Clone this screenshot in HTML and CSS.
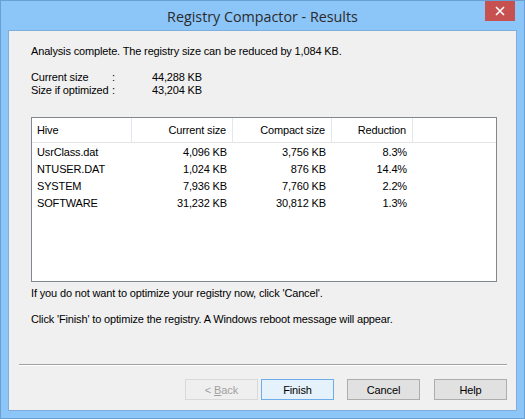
FILE: index.html
```html
<!DOCTYPE html>
<html>
<head>
<meta charset="utf-8">
<link rel="stylesheet" href="styles.css">
</head>
<body>
<div class="window">
  <div class="titlebar">
    <span class="title">Registry Compactor - Results</span>
    <div class="close">
      <svg width="10" height="10" viewBox="0 0 10 10"><path d="M1 1 L9 9 M9 1 L1 9" stroke="#fff" stroke-width="1.6" fill="none"/></svg>
    </div>
  </div>
  <div class="client">
    <p class="summary">Analysis complete. The registry size can be reduced by 1,084 KB.</p>
    <div class="stats">
      <span>Current size</span><span>:</span><span class="val">44,288 KB</span>
      <span>Size if optimized</span><span>:</span><span class="val">43,204 KB</span>
    </div>
    <div class="list">
      <div class="lhead">
        <div class="hc c1">Hive</div>
        <div class="hc c2">Current size</div>
        <div class="hc c3">Compact size</div>
        <div class="hc c4">Reduction</div>
      </div>
      <div class="row"><div class="c1">UsrClass.dat</div><div class="c2">4,096 KB</div><div class="c3">3,756 KB</div><div class="c4">8.3%</div></div>
      <div class="row"><div class="c1">NTUSER.DAT</div><div class="c2">1,024 KB</div><div class="c3">876 KB</div><div class="c4">14.4%</div></div>
      <div class="row"><div class="c1">SYSTEM</div><div class="c2">7,936 KB</div><div class="c3">7,760 KB</div><div class="c4">2.2%</div></div>
      <div class="row"><div class="c1">SOFTWARE</div><div class="c2">31,232 KB</div><div class="c3">30,812 KB</div><div class="c4">1.3%</div></div>
    </div>
    <p class="note1">If you do not want to optimize your registry now, click 'Cancel'.</p>
    <p class="note2">Click 'Finish' to optimize the registry. A Windows reboot message will appear.</p>
    <div class="sep"></div>
    <div class="buttons">
      <button class="btn disabled">&lt; <u>B</u>ack</button>
      <button class="btn default">Finish</button>
      <button class="btn gap">Cancel</button>
      <button class="btn gap">Help</button>
    </div>
  </div>
</div>
</body>
</html>
```
FILE: styles.css
```css
* { box-sizing: border-box; }
html, body { margin: 0; padding: 0; }
body { width: 525px; height: 419px; overflow: hidden; background: #fff; }

.window {
  width: 525px;
  height: 419px;
  background: #8cc5f8;
  border: 1px solid #6a9fd4;
  display: flex;
  flex-direction: column;
  padding: 0 7px 7px 7px;
  position: relative;
}

.titlebar {
  height: 29px;
  display: flex;
  align-items: center;
  justify-content: center;
}
.title {
  font-family: "Open Sans", "Noto Sans", sans-serif;
  font-size: 14.3px;
  color: #2b2b2b;
  margin-left: 0;
  margin-top: 1px;
}
.close {
  position: absolute;
  top: 0;
  right: 9px;
  width: 30px;
  height: 20px;
  background: #c75050;
  display: flex;
  align-items: center;
  justify-content: center;
}

.client {
  flex: 1;
  background: #f0f0f0;
  border: 1px solid #7faedd;
  display: flex;
  flex-direction: column;
  position: relative;
  font-family: "Liberation Sans", Arial, sans-serif;
  font-size: 11px;
  letter-spacing: -0.15px;
  line-height: 13px;
  color: #000;
  padding: 14px 10px 0 10px;
}
p { margin: 0; }
.summary { padding-left: 12px; }

.stats {
  display: grid;
  grid-template-columns: 81px 10px 80px;
  margin: 13px 0 0 12px;
}
.stats .val { text-align: right; }

.list {
  margin: 20px 0 0 12px;
  width: 466px;
  height: 165px;
  background: #fff;
  border: 1px solid #828790;
}
.lhead {
  display: flex;
  height: 25px;
  border-bottom: 1px solid #e5e5e5;
}
.hc {
  display: flex;
  align-items: center;
  border-right: 1px solid #e3e8f0;
  justify-content: flex-end;
  padding-top: 1px;
}
.hc.c1 { justify-content: flex-start; }
.row { display: flex; height: 17px; align-items: center; }
.lhead + .row { margin-top: 1px; }
.c1 { width: 100px; padding-left: 5px; }
.c2 { width: 101px; padding-right: 6px; text-align: right; }
.c3 { width: 99px; padding-right: 6px; text-align: right; }
.c4 { width: 81px; padding-right: 6px; text-align: right; }

.note1 { margin: 5px 0 0 12px; }
.note2 { margin: 13px 0 0 12px; }

.sep {
  margin: 38px 0 0 0;
  height: 2px;
  border-top: 1px solid #a0a0a0;
  border-bottom: 1px solid #fff;
  width: 488px;
}

.buttons {
  display: flex;
  justify-content: flex-end;
  margin-top: 13px;
  width: 488px;
}
.btn {
  width: 73px;
  height: 21px;
  font-family: "Liberation Sans", Arial, sans-serif;
  font-size: 11px;
  letter-spacing: -0.1px;
  background: #e1e1e1;
  border: 1px solid #adadad;
  color: #000;
  padding: 0;
  margin: 0;
}
.btn.disabled { color: #a0a0a0; background: #efefef; border-color: #d9d9d9; }
.btn.default { background: #e5f1fb; border-color: #6fadea; margin-left: 3px; }
.btn.gap { margin-left: 13px; }
.btn.gap + .btn.gap { margin-left: 14px; }
```
